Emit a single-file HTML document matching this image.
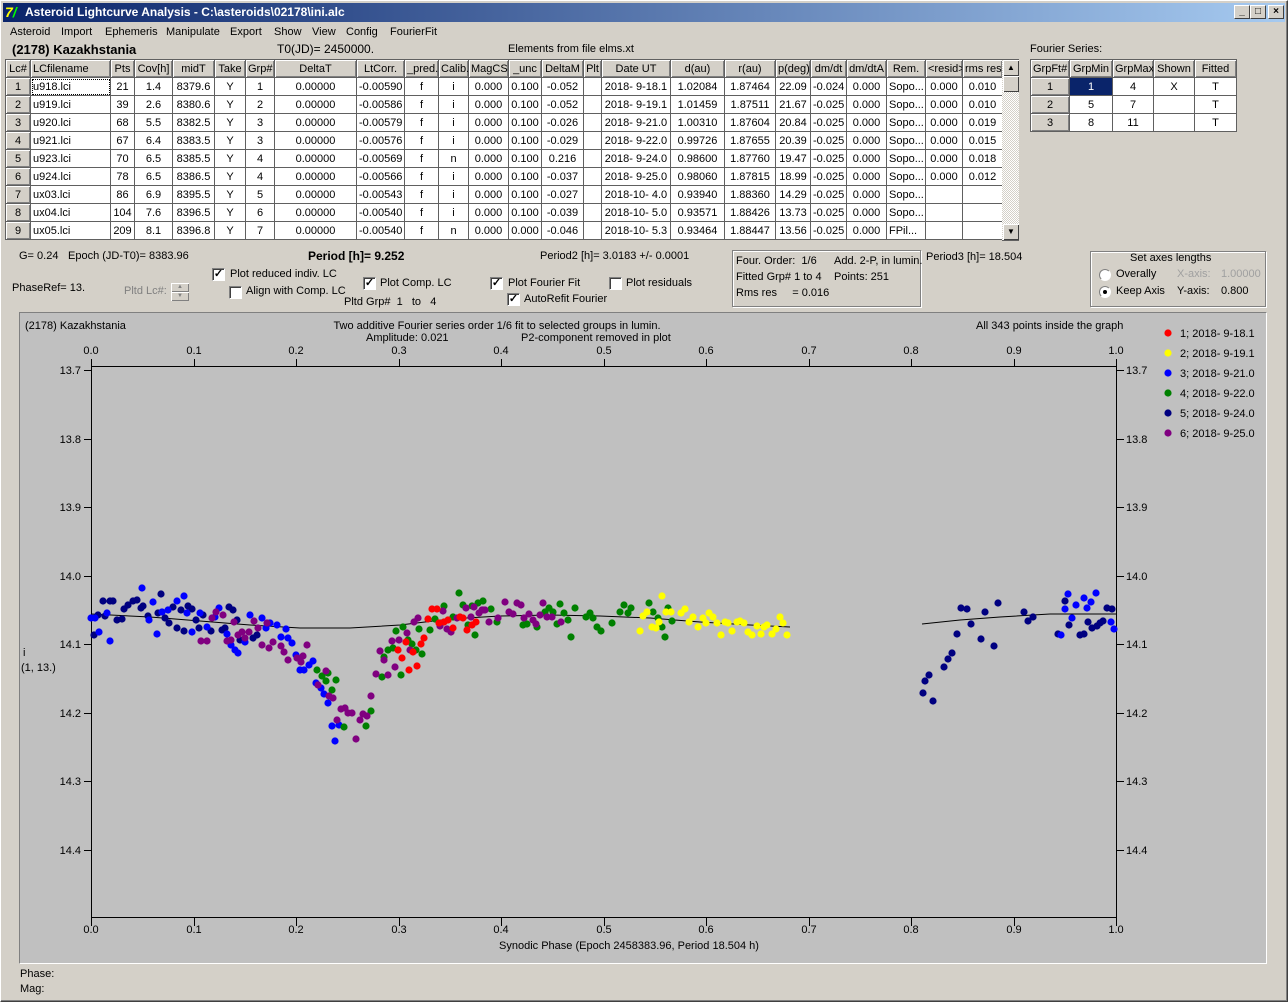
<!DOCTYPE html>
<html><head><meta charset="utf-8"><style>
*{box-sizing:border-box}
body{margin:0;width:1288px;height:1002px;background:#d4d0c8;font-family:"Liberation Sans",sans-serif;font-size:11px;color:#000;position:relative;overflow:hidden}
.a{position:absolute;white-space:nowrap}
.win{position:absolute;left:0;top:0;width:1288px;height:1002px;border:1px solid #fff;border-right-color:#404040;border-bottom-color:#404040;box-shadow:inset -1px -1px #808080,inset 1px 1px #d4d0c8}
.title{position:absolute;left:3px;top:3px;width:1282px;height:19px;background:linear-gradient(90deg,#0a246a,#a6caf0);color:#fff;font-weight:bold;font-size:12px;line-height:19px;padding-left:22px}
.tb{position:absolute;top:5px;width:16px;height:14px;background:#d4d0c8;border:1px solid #fff;border-right-color:#404040;border-bottom-color:#404040;font-size:10px;line-height:12px;text-align:center;color:#000;font-weight:bold}
table{border-collapse:collapse;table-layout:fixed;position:absolute}
td{height:18px;border:1px solid #606060;padding:0 2px;overflow:hidden;white-space:nowrap;text-align:center;background:#fff;font-size:11px;line-height:16px}
td.h{background:#d4d0c8;box-shadow:inset 1px 1px #fff,inset -1px -1px #808080}
td.l{text-align:left}
.cb{position:absolute;width:13px;height:13px;background:#fff;border:1px solid #808080;border-right-color:#fff;border-bottom-color:#fff;box-shadow:inset 1px 1px #404040;font-size:11px;line-height:11px;text-align:center;font-weight:bold}
.rd{position:absolute;width:12px;height:12px;border-radius:50%;background:#fff;border:1px solid #808080;border-right-color:#fff;border-bottom-color:#fff}
.box{position:absolute;border:1px solid #808080;box-shadow:1px 1px #fff,inset 1px 1px #fff}
</style></head><body>
<div class="win"></div>
<div class="title">Asteroid Lightcurve Analysis - C:\asteroids\02178\ini.alc</div>
<div class="a" style="left:5px;top:4px;width:16px;height:16px;color:#ff0;font-weight:bold;font-size:14px;line-height:16px;font-style:italic">7<span style="color:#0f0">/</span></div>
<div class="tb" style="left:1234px">_</div><div class="tb" style="left:1250px">□</div><div class="tb" style="left:1268px">×</div>
<div class="a" style="left:10px;top:26px">Asteroid</div>
<div class="a" style="left:61px;top:26px">Import</div>
<div class="a" style="left:105px;top:26px">Ephemeris</div>
<div class="a" style="left:166px;top:26px">Manipulate</div>
<div class="a" style="left:230px;top:26px">Export</div>
<div class="a" style="left:274px;top:26px">Show</div>
<div class="a" style="left:312px;top:26px">View</div>
<div class="a" style="left:346px;top:26px">Config</div>
<div class="a" style="left:390px;top:26px">FourierFit</div>

<div class="a" style="left:12px;top:42px;font-weight:bold;font-size:13px">(2178) Kazakhstania</div>
<div class="a" style="left:277px;top:42px;font-size:12px">T0(JD)= 2450000.</div>
<div class="a" style="left:508px;top:43px">Elements from file elms.xt</div>
<div class="a" style="left:1030px;top:43px">Fourier Series:</div>

<table style="left:5px;top:59px;width:997px">
<colgroup><col style="width:25px"><col style="width:80px"><col style="width:24px"><col style="width:38px"><col style="width:42px"><col style="width:31px"><col style="width:29px"><col style="width:82px"><col style="width:48px"><col style="width:34px"><col style="width:30px"><col style="width:40px"><col style="width:33px"><col style="width:42px"><col style="width:18px"><col style="width:69px"><col style="width:54px"><col style="width:51px"><col style="width:35px"><col style="width:36px"><col style="width:40px"><col style="width:39px"><col style="width:37px"><col style="width:40px"></colgroup>
<tr><td class="h">Lc#</td><td class="h l">LCfilename</td><td class="h">Pts</td><td class="h">Cov[h]</td><td class="h">midT</td><td class="h">Take</td><td class="h">Grp#</td><td class="h">DeltaT</td><td class="h">LtCorr.</td><td class="h">_pred.</td><td class="h">Calib.</td><td class="h">MagCS</td><td class="h">_unc</td><td class="h">DeltaM</td><td class="h">Plt</td><td class="h">Date UT</td><td class="h">d(au)</td><td class="h">r(au)</td><td class="h">p(deg)</td><td class="h">dm/dt</td><td class="h">dm/dtA</td><td class="h">Rem.</td><td class="h">&lt;resid&gt;</td><td class="h">rms res</td></tr>
<tr><td class="h">1</td><td class="l" style="outline:1px dotted #000;outline-offset:-2px">u918.lci</td><td>21</td><td>1.4</td><td>8379.6</td><td>Y</td><td>1</td><td>0.00000</td><td>-0.00590</td><td>f</td><td>i</td><td>0.000</td><td>0.100</td><td>-0.052</td><td></td><td>2018- 9-18.1</td><td>1.02084</td><td>1.87464</td><td>22.09</td><td>-0.024</td><td>0.000</td><td class="l">Sopo...</td><td>0.000</td><td>0.010</td></tr>
<tr><td class="h">2</td><td class="l">u919.lci</td><td>39</td><td>2.6</td><td>8380.6</td><td>Y</td><td>2</td><td>0.00000</td><td>-0.00586</td><td>f</td><td>i</td><td>0.000</td><td>0.100</td><td>-0.052</td><td></td><td>2018- 9-19.1</td><td>1.01459</td><td>1.87511</td><td>21.67</td><td>-0.025</td><td>0.000</td><td class="l">Sopo...</td><td>0.000</td><td>0.010</td></tr>
<tr><td class="h">3</td><td class="l">u920.lci</td><td>68</td><td>5.5</td><td>8382.5</td><td>Y</td><td>3</td><td>0.00000</td><td>-0.00579</td><td>f</td><td>i</td><td>0.000</td><td>0.100</td><td>-0.026</td><td></td><td>2018- 9-21.0</td><td>1.00310</td><td>1.87604</td><td>20.84</td><td>-0.025</td><td>0.000</td><td class="l">Sopo...</td><td>0.000</td><td>0.019</td></tr>
<tr><td class="h">4</td><td class="l">u921.lci</td><td>67</td><td>6.4</td><td>8383.5</td><td>Y</td><td>3</td><td>0.00000</td><td>-0.00576</td><td>f</td><td>i</td><td>0.000</td><td>0.100</td><td>-0.029</td><td></td><td>2018- 9-22.0</td><td>0.99726</td><td>1.87655</td><td>20.39</td><td>-0.025</td><td>0.000</td><td class="l">Sopo...</td><td>0.000</td><td>0.015</td></tr>
<tr><td class="h">5</td><td class="l">u923.lci</td><td>70</td><td>6.5</td><td>8385.5</td><td>Y</td><td>4</td><td>0.00000</td><td>-0.00569</td><td>f</td><td>n</td><td>0.000</td><td>0.100</td><td>0.216</td><td></td><td>2018- 9-24.0</td><td>0.98600</td><td>1.87760</td><td>19.47</td><td>-0.025</td><td>0.000</td><td class="l">Sopo...</td><td>0.000</td><td>0.018</td></tr>
<tr><td class="h">6</td><td class="l">u924.lci</td><td>78</td><td>6.5</td><td>8386.5</td><td>Y</td><td>4</td><td>0.00000</td><td>-0.00566</td><td>f</td><td>i</td><td>0.000</td><td>0.100</td><td>-0.037</td><td></td><td>2018- 9-25.0</td><td>0.98060</td><td>1.87815</td><td>18.99</td><td>-0.025</td><td>0.000</td><td class="l">Sopo...</td><td>0.000</td><td>0.012</td></tr>
<tr><td class="h">7</td><td class="l">ux03.lci</td><td>86</td><td>6.9</td><td>8395.5</td><td>Y</td><td>5</td><td>0.00000</td><td>-0.00543</td><td>f</td><td>i</td><td>0.000</td><td>0.100</td><td>-0.027</td><td></td><td>2018-10- 4.0</td><td>0.93940</td><td>1.88360</td><td>14.29</td><td>-0.025</td><td>0.000</td><td class="l">Sopo...</td><td></td><td></td></tr>
<tr><td class="h">8</td><td class="l">ux04.lci</td><td>104</td><td>7.6</td><td>8396.5</td><td>Y</td><td>6</td><td>0.00000</td><td>-0.00540</td><td>f</td><td>i</td><td>0.000</td><td>0.100</td><td>-0.039</td><td></td><td>2018-10- 5.0</td><td>0.93571</td><td>1.88426</td><td>13.73</td><td>-0.025</td><td>0.000</td><td class="l">Sopo...</td><td></td><td></td></tr>
<tr><td class="h">9</td><td class="l">ux05.lci</td><td>209</td><td>8.1</td><td>8396.8</td><td>Y</td><td>7</td><td>0.00000</td><td>-0.00540</td><td>f</td><td>n</td><td>0.000</td><td>0.000</td><td>-0.046</td><td></td><td>2018-10- 5.3</td><td>0.93464</td><td>1.88447</td><td>13.56</td><td>-0.025</td><td>0.000</td><td class="l">FPil...</td><td></td><td></td></tr>
</table>
<div class="a" style="left:1002px;top:59px;width:17px;height:182px;background:repeating-conic-gradient(#fff 0 25%,#d4d0c8 0 50%) 0 0/2px 2px;border-top:1px solid #606060;border-bottom:1px solid #606060"></div>
<div class="a" style="left:1003px;top:60px;width:16px;height:16px;background:#d4d0c8;box-shadow:inset 1px 1px #fff,inset -1px -1px #404040;font-size:8px;text-align:center;line-height:15px">▲</div>
<div class="a" style="left:1003px;top:76px;width:16px;height:16px;background:#d4d0c8;box-shadow:inset 1px 1px #fff,inset -1px -1px #404040"></div>
<div class="a" style="left:1003px;top:224px;width:16px;height:16px;background:#d4d0c8;box-shadow:inset 1px 1px #fff,inset -1px -1px #404040;font-size:8px;text-align:center;line-height:15px">▼</div>

<table style="left:1030px;top:59px;width:206px">
<colgroup><col style="width:39px"><col style="width:43px"><col style="width:41px"><col style="width:41px"><col style="width:42px"></colgroup>
<tr><td class="h">GrpFt#</td><td class="h">GrpMin</td><td class="h">GrpMax</td><td class="h">Shown</td><td class="h">Fitted</td></tr>
<tr><td class="h">1</td><td style="background:#0a246a;color:#fff">1</td><td>4</td><td>X</td><td>T</td></tr>
<tr><td class="h">2</td><td>5</td><td>7</td><td></td><td>T</td></tr>
<tr><td class="h">3</td><td>8</td><td>11</td><td></td><td>T</td></tr>
</table>

<div class="a" style="left:19px;top:250px">G= 0.24</div>
<div class="a" style="left:68px;top:250px">Epoch (JD-T0)= 8383.96</div>
<div class="a" style="left:308px;top:249px;font-weight:bold;font-size:12px">Period [h]= 9.252</div>
<div class="a" style="left:540px;top:250px">Period2 [h]= 3.0183 +/- 0.0001</div>
<div class="a" style="left:12px;top:282px">PhaseRef= 13.</div>
<div class="a" style="left:124px;top:285px;color:#808080">Pltd Lc#:</div>
<div class="a" style="left:171px;top:283px;width:18px;height:9px;background:#d4d0c8;box-shadow:inset 1px 1px #fff,inset -1px -1px #808080;font-size:6px;line-height:8px;text-align:center;color:#808080">▲</div>
<div class="a" style="left:171px;top:292px;width:18px;height:9px;background:#d4d0c8;box-shadow:inset 1px 1px #fff,inset -1px -1px #808080;font-size:6px;line-height:8px;text-align:center;color:#808080">▼</div>
<div class="cb" style="left:212px;top:268px">✓</div><div class="a" style="left:230px;top:268px">Plot reduced indiv. LC</div>
<div class="cb" style="left:229px;top:286px"></div><div class="a" style="left:246px;top:285px">Align with Comp. LC</div>
<div class="cb" style="left:363px;top:277px">✓</div><div class="a" style="left:380px;top:277px">Plot Comp. LC</div>
<div class="a" style="left:344px;top:296px">Pltd Grp#&nbsp; 1 &nbsp; to &nbsp; 4</div>
<div class="cb" style="left:490px;top:277px">✓</div><div class="a" style="left:508px;top:277px">Plot Fourier Fit</div>
<div class="cb" style="left:609px;top:277px"></div><div class="a" style="left:626px;top:277px">Plot residuals</div>
<div class="cb" style="left:507px;top:293px">✓</div><div class="a" style="left:524px;top:293px">AutoRefit Fourier</div>

<div class="box" style="left:732px;top:250px;width:189px;height:57px"></div>
<div class="a" style="left:736px;top:255px">Four. Order:&nbsp; 1/6</div>
<div class="a" style="left:834px;top:255px">Add. 2-P, in lumin.</div>
<div class="a" style="left:736px;top:271px">Fitted Grp# 1 to 4</div>
<div class="a" style="left:834px;top:271px">Points: 251</div>
<div class="a" style="left:736px;top:287px">Rms res &nbsp; &nbsp; = 0.016</div>
<div class="a" style="left:926px;top:251px">Period3 [h]= 18.504</div>

<div class="box" style="left:1090px;top:251px;width:176px;height:56px"></div>
<div class="a" style="left:1130px;top:252px">Set axes lengths</div>
<div class="rd" style="left:1099px;top:269px"></div><div class="a" style="left:1116px;top:268px">Overally</div>
<div class="a" style="left:1177px;top:268px;color:#a0a0a0">X-axis:</div><div class="a" style="left:1221px;top:268px;color:#a0a0a0">1.00000</div>
<div class="rd" style="left:1099px;top:286px"><div style="position:absolute;left:3px;top:3px;width:4px;height:4px;border-radius:50%;background:#000"></div></div><div class="a" style="left:1116px;top:285px">Keep Axis</div>
<div class="a" style="left:1177px;top:285px">Y-axis:</div><div class="a" style="left:1221px;top:285px">0.800</div>

<div class="a" style="left:19px;top:312px;width:1248px;height:652px;background:#c0c0c0;border:1px solid #808080;border-right-color:#fff;border-bottom-color:#fff"></div>

<svg class="a" style="left:0;top:0" width="1288" height="1002" font-family="Liberation Sans, sans-serif" font-size="11">
<g fill="#000">
<text x="25" y="329">(2178) Kazakhstania</text>
<text x="497" y="329" text-anchor="middle">Two additive Fourier series order 1/6 fit to selected groups in lumin.</text>
<text x="366" y="341">Amplitude: 0.021</text>
<text x="521" y="341">P2-component removed in plot</text>
<text x="976" y="329">All 343 points inside the graph</text>
<text x="23" y="656">i</text>
<text x="21" y="671">(1, 13.)</text>
<text x="629" y="949" text-anchor="middle">Synodic Phase (Epoch 2458383.96, Period 18.504 h)</text>
</g>
<g stroke="#000" fill="none" stroke-width="1">
<rect x="91.5" y="366.5" width="1025" height="551"/>
<path d="M91.5 359v8M194.5 359v8M296.5 359v8M399.5 359v8M501.5 359v8M604.5 359v8M706.5 359v8M809.5 359v8M911.5 359v8M1014.5 359v8M1116.5 359v8"/>
<path d="M91.5 918v8M194.5 918v8M296.5 918v8M399.5 918v8M501.5 918v8M604.5 918v8M706.5 918v8M809.5 918v8M911.5 918v8M1014.5 918v8M1116.5 918v8"/>
<path d="M84 370.5h7M84 439.5h7M84 507.5h7M84 576.5h7M84 644.5h7M84 713.5h7M84 781.5h7M84 850.5h7"/>
<path d="M1117 370.5h7M1117 439.5h7M1117 507.5h7M1117 576.5h7M1117 644.5h7M1117 713.5h7M1117 781.5h7M1117 850.5h7"/>
<polyline points="91,614 150,617 200,621 250,625 300,628 350,628 400,625 450,619 500,616 550,615 600,616 650,618 700,622 750,625 790,627"/>
<polyline points="922,624 960,620 1000,617 1050,614 1116,614"/>
</g>
<g fill="#000" text-anchor="middle">
<text x="91" y="354">0.0</text><text x="194" y="354">0.1</text><text x="296" y="354">0.2</text><text x="399" y="354">0.3</text><text x="501" y="354">0.4</text><text x="604" y="354">0.5</text><text x="706" y="354">0.6</text><text x="809" y="354">0.7</text><text x="911" y="354">0.8</text><text x="1014" y="354">0.9</text><text x="1116" y="354">1.0</text>
<text x="91" y="933">0.0</text><text x="194" y="933">0.1</text><text x="296" y="933">0.2</text><text x="399" y="933">0.3</text><text x="501" y="933">0.4</text><text x="604" y="933">0.5</text><text x="706" y="933">0.6</text><text x="809" y="933">0.7</text><text x="911" y="933">0.8</text><text x="1014" y="933">0.9</text><text x="1116" y="933">1.0</text>
</g>
<g fill="#000" text-anchor="end">
<text x="81" y="374">13.7</text><text x="81" y="443">13.8</text><text x="81" y="511">13.9</text><text x="81" y="580">14.0</text><text x="81" y="648">14.1</text><text x="81" y="717">14.2</text><text x="81" y="785">14.3</text><text x="81" y="854">14.4</text>
</g>
<g fill="#000">
<text x="1126" y="374">13.7</text><text x="1126" y="443">13.8</text><text x="1126" y="511">13.9</text><text x="1126" y="580">14.0</text><text x="1126" y="648">14.1</text><text x="1126" y="717">14.2</text><text x="1126" y="785">14.3</text><text x="1126" y="854">14.4</text>
<text x="1180" y="337">1; 2018- 9-18.1</text><text x="1180" y="357">2; 2018- 9-19.1</text><text x="1180" y="377">3; 2018- 9-21.0</text><text x="1180" y="397">4; 2018- 9-22.0</text><text x="1180" y="417">5; 2018- 9-24.0</text><text x="1180" y="437">6; 2018- 9-25.0</text>
</g>
<circle cx="1168" cy="333" r="3.6" fill="#f00"/><circle cx="1168" cy="353" r="3.6" fill="#ff0"/><circle cx="1168" cy="373" r="3.6" fill="#00f"/><circle cx="1168" cy="393" r="3.6" fill="#008000"/><circle cx="1168" cy="413" r="3.6" fill="#000080"/><circle cx="1168" cy="433" r="3.6" fill="#800080"/>
<g fill="#000080">
<circle cx="94" cy="635" r="3.6"/><circle cx="98" cy="615" r="3.6"/><circle cx="103" cy="601" r="3.6"/><circle cx="110" cy="601" r="3.6"/><circle cx="113" cy="601" r="3.6"/><circle cx="105" cy="616" r="3.6"/><circle cx="117" cy="620" r="3.6"/><circle cx="122" cy="619" r="3.6"/><circle cx="124" cy="609" r="3.6"/><circle cx="128" cy="605" r="3.6"/><circle cx="133" cy="601" r="3.6"/><circle cx="137" cy="600" r="3.6"/><circle cx="141" cy="608" r="3.6"/><circle cx="143" cy="606" r="3.6"/><circle cx="148" cy="616" r="3.6"/><circle cx="158" cy="613" r="3.6"/><circle cx="161" cy="594" r="3.6"/><circle cx="165" cy="618" r="3.6"/><circle cx="169" cy="623" r="3.6"/><circle cx="173" cy="607" r="3.6"/><circle cx="177" cy="628" r="3.6"/><circle cx="181" cy="610" r="3.6"/><circle cx="184" cy="631" r="3.6"/><circle cx="188" cy="606" r="3.6"/><circle cx="192" cy="609" r="3.6"/><circle cx="196" cy="620" r="3.6"/><circle cx="199" cy="628" r="3.6"/><circle cx="203" cy="615" r="3.6"/><circle cx="211" cy="631" r="3.6"/><circle cx="222" cy="630" r="3.6"/><circle cx="225" cy="628" r="3.6"/><circle cx="229" cy="607" r="3.6"/><circle cx="233" cy="610" r="3.6"/><circle cx="237" cy="620" r="3.6"/><circle cx="240" cy="640" r="3.6"/><circle cx="253" cy="638" r="3.6"/><circle cx="257" cy="635" r="3.6"/>
<circle cx="923" cy="693" r="3.6"/><circle cx="925" cy="681" r="3.6"/><circle cx="929" cy="675" r="3.6"/><circle cx="933" cy="701" r="3.6"/><circle cx="944" cy="667" r="3.6"/><circle cx="948" cy="659" r="3.6"/><circle cx="952" cy="653" r="3.6"/><circle cx="957" cy="634" r="3.6"/><circle cx="961" cy="608" r="3.6"/><circle cx="967" cy="609" r="3.6"/><circle cx="971" cy="624" r="3.6"/><circle cx="981" cy="639" r="3.6"/><circle cx="985" cy="612" r="3.6"/><circle cx="994" cy="646" r="3.6"/><circle cx="998" cy="603" r="3.6"/><circle cx="1024" cy="612" r="3.6"/><circle cx="1028" cy="621" r="3.6"/><circle cx="1033" cy="617" r="3.6"/><circle cx="1058" cy="634" r="3.6"/><circle cx="1065" cy="601" r="3.6"/><circle cx="1069" cy="625" r="3.6"/><circle cx="1080" cy="635" r="3.6"/><circle cx="1084" cy="634" r="3.6"/><circle cx="1088" cy="622" r="3.6"/><circle cx="1092" cy="628" r="3.6"/><circle cx="1097" cy="626" r="3.6"/><circle cx="1100" cy="623" r="3.6"/><circle cx="1103" cy="621" r="3.6"/><circle cx="1107" cy="608" r="3.6"/><circle cx="1112" cy="609" r="3.6"/>
</g>
<g fill="#0000ff">
<circle cx="91" cy="618" r="3.6"/><circle cx="95" cy="618" r="3.6"/><circle cx="99" cy="632" r="3.6"/><circle cx="107" cy="613" r="3.6"/><circle cx="110" cy="641" r="3.6"/><circle cx="142" cy="588" r="3.6"/><circle cx="149" cy="620" r="3.6"/><circle cx="153" cy="602" r="3.6"/><circle cx="157" cy="634" r="3.6"/><circle cx="162" cy="612" r="3.6"/><circle cx="168" cy="610" r="3.6"/><circle cx="177" cy="601" r="3.6"/><circle cx="184" cy="596" r="3.6"/><circle cx="187" cy="613" r="3.6"/><circle cx="192" cy="632" r="3.6"/><circle cx="200" cy="613" r="3.6"/><circle cx="207" cy="627" r="3.6"/><circle cx="215" cy="617" r="3.6"/><circle cx="219" cy="608" r="3.6"/><circle cx="227" cy="634" r="3.6"/><circle cx="231" cy="645" r="3.6"/><circle cx="235" cy="650" r="3.6"/><circle cx="238" cy="653" r="3.6"/><circle cx="245" cy="642" r="3.6"/><circle cx="250" cy="615" r="3.6"/><circle cx="262" cy="618" r="3.6"/><circle cx="266" cy="628" r="3.6"/><circle cx="270" cy="623" r="3.6"/><circle cx="277" cy="625" r="3.6"/><circle cx="281" cy="637" r="3.6"/><circle cx="286" cy="629" r="3.6"/><circle cx="288" cy="638" r="3.6"/><circle cx="292" cy="643" r="3.6"/><circle cx="296" cy="655" r="3.6"/><circle cx="300" cy="670" r="3.6"/><circle cx="304" cy="670" r="3.6"/><circle cx="309" cy="665" r="3.6"/><circle cx="313" cy="661" r="3.6"/><circle cx="316" cy="683" r="3.6"/><circle cx="321" cy="688" r="3.6"/><circle cx="324" cy="694" r="3.6"/><circle cx="328" cy="703" r="3.6"/><circle cx="332" cy="726" r="3.6"/><circle cx="339" cy="725" r="3.6"/><circle cx="335" cy="741" r="3.6"/>
<circle cx="1061" cy="635" r="3.6"/><circle cx="1065" cy="609" r="3.6"/><circle cx="1068" cy="594" r="3.6"/><circle cx="1072" cy="618" r="3.6"/><circle cx="1076" cy="605" r="3.6"/><circle cx="1084" cy="598" r="3.6"/><circle cx="1087" cy="608" r="3.6"/><circle cx="1091" cy="602" r="3.6"/><circle cx="1096" cy="593" r="3.6"/><circle cx="1111" cy="622" r="3.6"/><circle cx="1114" cy="629" r="3.6"/>
</g>
<g fill="#008000">
<circle cx="317" cy="670" r="3.6"/><circle cx="322" cy="676" r="3.6"/><circle cx="326" cy="681" r="3.6"/><circle cx="328" cy="673" r="3.6"/><circle cx="336" cy="680" r="3.6"/><circle cx="332" cy="690" r="3.6"/><circle cx="344" cy="727" r="3.6"/><circle cx="366" cy="726" r="3.6"/><circle cx="371" cy="711" r="3.6"/><circle cx="382" cy="677" r="3.6"/><circle cx="384" cy="657" r="3.6"/><circle cx="388" cy="650" r="3.6"/><circle cx="393" cy="648" r="3.6"/><circle cx="396" cy="631" r="3.6"/><circle cx="401" cy="675" r="3.6"/><circle cx="403" cy="627" r="3.6"/><circle cx="408" cy="640" r="3.6"/><circle cx="412" cy="644" r="3.6"/><circle cx="416" cy="650" r="3.6"/><circle cx="419" cy="629" r="3.6"/><circle cx="422" cy="654" r="3.6"/><circle cx="430" cy="630" r="3.6"/><circle cx="435" cy="619" r="3.6"/><circle cx="444" cy="606" r="3.6"/><circle cx="453" cy="617" r="3.6"/><circle cx="459" cy="593" r="3.6"/><circle cx="463" cy="605" r="3.6"/><circle cx="468" cy="625" r="3.6"/><circle cx="472" cy="606" r="3.6"/><circle cx="475" cy="635" r="3.6"/><circle cx="478" cy="603" r="3.6"/><circle cx="483" cy="601" r="3.6"/><circle cx="491" cy="609" r="3.6"/><circle cx="497" cy="622" r="3.6"/>
<circle cx="523" cy="625" r="3.6"/><circle cx="527" cy="624" r="3.6"/><circle cx="537" cy="627" r="3.6"/><circle cx="545" cy="612" r="3.6"/><circle cx="549" cy="608" r="3.6"/><circle cx="553" cy="612" r="3.6"/><circle cx="557" cy="624" r="3.6"/><circle cx="560" cy="604" r="3.6"/><circle cx="564" cy="613" r="3.6"/><circle cx="568" cy="620" r="3.6"/><circle cx="571" cy="637" r="3.6"/><circle cx="575" cy="608" r="3.6"/><circle cx="586" cy="617" r="3.6"/><circle cx="590" cy="613" r="3.6"/><circle cx="593" cy="618" r="3.6"/><circle cx="597" cy="627" r="3.6"/><circle cx="601" cy="631" r="3.6"/><circle cx="612" cy="623" r="3.6"/><circle cx="620" cy="612" r="3.6"/><circle cx="624" cy="605" r="3.6"/><circle cx="628" cy="613" r="3.6"/><circle cx="631" cy="608" r="3.6"/><circle cx="649" cy="603" r="3.6"/><circle cx="653" cy="612" r="3.6"/><circle cx="658" cy="618" r="3.6"/><circle cx="662" cy="627" r="3.6"/><circle cx="665" cy="637" r="3.6"/><circle cx="668" cy="608" r="3.6"/><circle cx="672" cy="621" r="3.6"/>
</g>
<g fill="#800080">
<circle cx="201" cy="641" r="3.6"/><circle cx="207" cy="641" r="3.6"/><circle cx="212" cy="618" r="3.6"/><circle cx="216" cy="612" r="3.6"/><circle cx="223" cy="615" r="3.6"/><circle cx="227" cy="641" r="3.6"/><circle cx="231" cy="640" r="3.6"/><circle cx="234" cy="622" r="3.6"/><circle cx="238" cy="635" r="3.6"/><circle cx="242" cy="632" r="3.6"/><circle cx="245" cy="638" r="3.6"/><circle cx="249" cy="632" r="3.6"/><circle cx="254" cy="621" r="3.6"/><circle cx="258" cy="628" r="3.6"/><circle cx="262" cy="645" r="3.6"/><circle cx="267" cy="623" r="3.6"/><circle cx="269" cy="648" r="3.6"/><circle cx="273" cy="642" r="3.6"/><circle cx="281" cy="646" r="3.6"/><circle cx="284" cy="652" r="3.6"/><circle cx="288" cy="660" r="3.6"/><circle cx="297" cy="658" r="3.6"/><circle cx="301" cy="662" r="3.6"/><circle cx="303" cy="656" r="3.6"/><circle cx="307" cy="645" r="3.6"/><circle cx="318" cy="685" r="3.6"/><circle cx="326" cy="671" r="3.6"/><circle cx="329" cy="696" r="3.6"/><circle cx="333" cy="698" r="3.6"/><circle cx="341" cy="709" r="3.6"/><circle cx="345" cy="708" r="3.6"/><circle cx="348" cy="713" r="3.6"/><circle cx="352" cy="713" r="3.6"/><circle cx="360" cy="720" r="3.6"/><circle cx="363" cy="714" r="3.6"/><circle cx="367" cy="716" r="3.6"/><circle cx="356" cy="739" r="3.6"/><circle cx="337" cy="720" r="3.6"/><circle cx="371" cy="696" r="3.6"/><circle cx="376" cy="674" r="3.6"/><circle cx="380" cy="651" r="3.6"/><circle cx="384" cy="660" r="3.6"/><circle cx="388" cy="675" r="3.6"/><circle cx="392" cy="641" r="3.6"/><circle cx="395" cy="667" r="3.6"/><circle cx="399" cy="640" r="3.6"/><circle cx="407" cy="633" r="3.6"/><circle cx="410" cy="650" r="3.6"/><circle cx="414" cy="622" r="3.6"/><circle cx="418" cy="618" r="3.6"/><circle cx="440" cy="626" r="3.6"/><circle cx="443" cy="611" r="3.6"/><circle cx="447" cy="629" r="3.6"/><circle cx="451" cy="632" r="3.6"/><circle cx="457" cy="618" r="3.6"/><circle cx="466" cy="608" r="3.6"/><circle cx="471" cy="617" r="3.6"/><circle cx="474" cy="607" r="3.6"/><circle cx="479" cy="613" r="3.6"/><circle cx="483" cy="610" r="3.6"/><circle cx="489" cy="622" r="3.6"/><circle cx="498" cy="618" r="3.6"/>
<circle cx="482" cy="610" r="3.6"/><circle cx="485" cy="610" r="3.6"/><circle cx="505" cy="602" r="3.6"/><circle cx="509" cy="612" r="3.6"/><circle cx="513" cy="614" r="3.6"/><circle cx="517" cy="603" r="3.6"/><circle cx="521" cy="605" r="3.6"/><circle cx="524" cy="618" r="3.6"/><circle cx="529" cy="614" r="3.6"/><circle cx="533" cy="620" r="3.6"/><circle cx="536" cy="624" r="3.6"/><circle cx="540" cy="615" r="3.6"/><circle cx="543" cy="603" r="3.6"/><circle cx="547" cy="617" r="3.6"/><circle cx="552" cy="617" r="3.6"/><circle cx="561" cy="622" r="3.6"/>
</g>
<g fill="#ff0000">
<circle cx="398" cy="650" r="3.6"/><circle cx="402" cy="658" r="3.6"/><circle cx="406" cy="642" r="3.6"/><circle cx="409" cy="670" r="3.6"/><circle cx="413" cy="652" r="3.6"/><circle cx="417" cy="666" r="3.6"/><circle cx="421" cy="644" r="3.6"/><circle cx="424" cy="638" r="3.6"/><circle cx="428" cy="619" r="3.6"/><circle cx="432" cy="609" r="3.6"/><circle cx="437" cy="609" r="3.6"/><circle cx="439" cy="623" r="3.6"/><circle cx="444" cy="622" r="3.6"/><circle cx="448" cy="620" r="3.6"/><circle cx="453" cy="628" r="3.6"/><circle cx="460" cy="617" r="3.6"/><circle cx="463" cy="618" r="3.6"/><circle cx="467" cy="630" r="3.6"/><circle cx="472" cy="625" r="3.6"/><circle cx="476" cy="622" r="3.6"/>
</g>
<g fill="#ffff00">
<circle cx="640" cy="631" r="3.6"/><circle cx="643" cy="616" r="3.6"/><circle cx="647" cy="612" r="3.6"/><circle cx="652" cy="627" r="3.6"/><circle cx="656" cy="628" r="3.6"/><circle cx="659" cy="622" r="3.6"/><circle cx="662" cy="596" r="3.6"/><circle cx="666" cy="612" r="3.6"/><circle cx="671" cy="612" r="3.6"/><circle cx="681" cy="613" r="3.6"/><circle cx="685" cy="609" r="3.6"/><circle cx="689" cy="622" r="3.6"/><circle cx="693" cy="617" r="3.6"/><circle cx="698" cy="627" r="3.6"/><circle cx="703" cy="618" r="3.6"/><circle cx="706" cy="623" r="3.6"/><circle cx="709" cy="613" r="3.6"/><circle cx="713" cy="617" r="3.6"/><circle cx="717" cy="623" r="3.6"/><circle cx="721" cy="635" r="3.6"/><circle cx="725" cy="622" r="3.6"/><circle cx="728" cy="623" r="3.6"/><circle cx="732" cy="631" r="3.6"/><circle cx="737" cy="622" r="3.6"/><circle cx="740" cy="621" r="3.6"/><circle cx="744" cy="623" r="3.6"/><circle cx="748" cy="632" r="3.6"/><circle cx="752" cy="635" r="3.6"/><circle cx="757" cy="626" r="3.6"/><circle cx="761" cy="634" r="3.6"/><circle cx="764" cy="627" r="3.6"/><circle cx="767" cy="625" r="3.6"/><circle cx="772" cy="634" r="3.6"/><circle cx="776" cy="629" r="3.6"/><circle cx="780" cy="617" r="3.6"/><circle cx="783" cy="623" r="3.6"/><circle cx="787" cy="635" r="3.6"/>
</g>
</svg>
<div class="a" style="left:20px;top:968px">Phase:</div>
<div class="a" style="left:20px;top:983px">Mag:</div>
</body></html>
